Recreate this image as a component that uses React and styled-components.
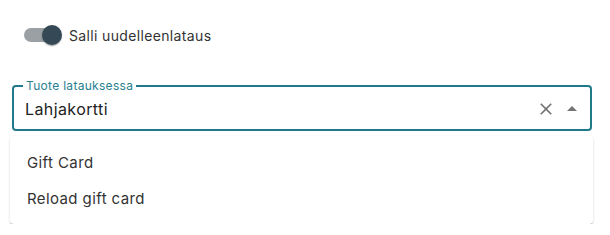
import React, { useState } from 'react';
import styled, { createGlobalStyle } from 'styled-components';

const GlobalStyle = createGlobalStyle`
  * { box-sizing: border-box; }
  body {
    margin: 0;
    background: #fff;
    font-family: Inter, "Noto Sans", sans-serif;
    color: rgba(0, 0, 0, 0.87);
  }
`;

const Page = styled.div`
  width: 610px;
  padding: 16px 18px 0 12px;
`;

const SwitchRow = styled.label`
  display: flex;
  align-items: center;
  gap: 8px;
  height: 38px;
  padding-left: 9px;
  cursor: pointer;
`;

const Track = styled.span`
  position: relative;
  display: inline-block;
  width: 34px;
  height: 14px;
  margin: 0 3px;
  border-radius: 7px;
  background: ${(p) => (p.$on ? '#9aa0a3' : '#bdbdbd')};
`;

const Thumb = styled.span`
  position: absolute;
  top: -3px;
  left: ${(p) => (p.$on ? '18px' : '-2px')};
  width: 20px;
  height: 20px;
  border-radius: 50%;
  background: ${(p) => (p.$on ? '#344955' : '#fafafa')};
  box-shadow: 0 2px 1px -1px rgba(0, 0, 0, 0.2), 0 1px 1px rgba(0, 0, 0, 0.14),
    0 1px 3px rgba(0, 0, 0, 0.12);
`;

const SwitchLabel = styled.span`
  font-size: 14px;
  color: #333;
  letter-spacing: 0.35px;
`;

const Field = styled.fieldset`
  margin: 26px 0 0;
  padding: 0 5px 0 11px;
  height: 51px;
  border: 2px solid #217a8a;
  border-radius: 4px;
  display: flex;
  align-items: center;
`;

const Legend = styled.legend`
  padding: 0 3px;
  margin-left: -2px;
  font-size: 12px;
  line-height: 12px;
  color: #2a8090;
  letter-spacing: 0.3px;
`;

const Value = styled.span`
  flex: 1;
  font-size: 16px;
  color: #222;
  letter-spacing: 0.4px;
  margin-top: -4px;
`;

const IconButton = styled.span`
  display: flex;
  align-items: center;
  justify-content: center;
  width: 26px;
  height: 26px;
  margin-top: -4px;
  color: #757575;
`;

const Menu = styled.ul`
  list-style: none;
  margin: 5px 0 0 -2px;
  padding: 8px 0;
  width: 583px;
  background: #fff;
  border-radius: 4px;
  box-shadow: 0 2px 1px -1px rgba(0, 0, 0, 0.2), 0 1px 1px rgba(0, 0, 0, 0.14),
    0 1px 3px rgba(0, 0, 0, 0.12);
`;

const Option = styled.li`
  height: 36px;
  display: flex;
  align-items: center;
  padding-left: 17px;
  font-size: 15px;
  color: #333;
  letter-spacing: 0.4px;
`;

const options = ['Gift Card', 'Reload gift card'];

const App = () => {
  const [on, setOn] = useState(true);

  return (
    <Page>
      <GlobalStyle />
      <SwitchRow onClick={() => setOn(!on)}>
        <Track $on={on}>
          <Thumb $on={on} />
        </Track>
        <SwitchLabel>Salli uudelleenlataus</SwitchLabel>
      </SwitchRow>
      <Field>
        <Legend>Tuote latauksessa</Legend>
        <Value>Lahjakortti</Value>
        <IconButton>
          <svg width="20" height="20" viewBox="0 0 24 24" fill="currentColor">
            <path d="M19 6.41 17.59 5 12 10.59 6.41 5 5 6.41 10.59 12 5 17.59 6.41 19 12 13.41 17.59 19 19 17.59 13.41 12z" />
          </svg>
        </IconButton>
        <IconButton>
          <svg width="24" height="24" viewBox="0 0 24 24" fill="currentColor">
            <path d="m7 14 5-5 5 5z" />
          </svg>
        </IconButton>
      </Field>
      <Menu>
        {options.map((item) => {
          return <Option key={item}>{item}</Option>;
        })}
      </Menu>
    </Page>
  );
};

export default App;
